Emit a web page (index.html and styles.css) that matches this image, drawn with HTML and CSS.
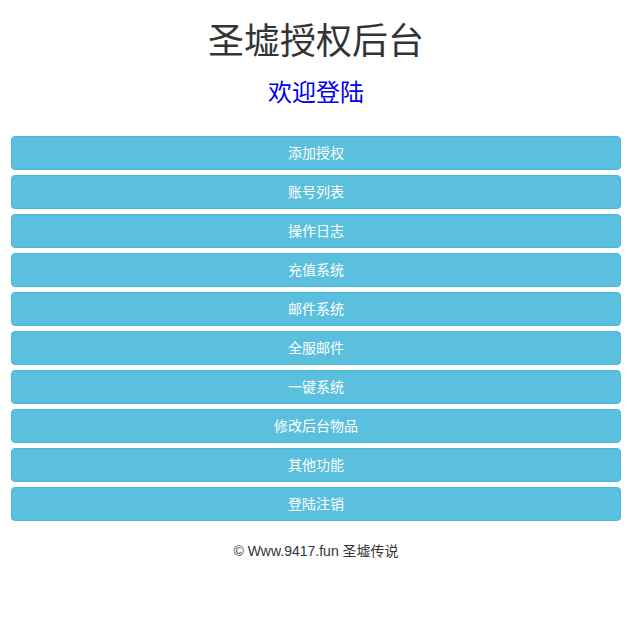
FILE: index.html
```html
<!DOCTYPE html>
<html lang="zh">
<head>
<meta charset="utf-8">
<title>圣墟授权后台</title>
<link rel="stylesheet" href="styles.css">
</head>
<body>
<div class="page">
  <h1 class="title">圣墟授权后台</h1>
  <h3 class="welcome">欢迎登陆</h3>
  <div class="menu">
    <a class="btn">添加授权</a>
    <a class="btn">账号列表</a>
    <a class="btn">操作日志</a>
    <a class="btn">充值系统</a>
    <a class="btn">邮件系统</a>
    <a class="btn">全服邮件</a>
    <a class="btn">一键系统</a>
    <a class="btn">修改后台物品</a>
    <a class="btn">其他功能</a>
    <a class="btn">登陆注销</a>
  </div>
  <p class="footer">© Www.9417.fun 圣墟传说</p>
</div>
</body>
</html>
```

FILE: styles.css
```css
html, body {
  margin: 0;
  padding: 0;
  background: #fff;
}
body {
  font-family: "Liberation Sans", "Noto Sans CJK SC", sans-serif;
  font-size: 14px;
  color: #333;
}
.page {
  padding: 0 12px 0 11px;
}
.title {
  margin: 22px 0 0;
  font-size: 36px;
  font-weight: 400;
  line-height: 40px;
  text-align: center;
  color: #333;
}
.welcome {
  margin: 11px 0 0;
  font-size: 24px;
  font-weight: 400;
  line-height: 40px;
  text-align: center;
  color: #0000ee;
}
.menu {
  margin-top: 23px;
  display: flex;
  flex-direction: column;
  gap: 5px;
}
.btn {
  display: block;
  height: 34px;
  box-sizing: border-box;
  line-height: 32px;
  text-align: center;
  color: #fff;
  background: #5bc0de;
  border: 1px solid #46b8da;
  border-radius: 4px;
  font-size: 14px;
  text-decoration: none;
}
.footer {
  margin: 20px 0 0;
  text-align: center;
  line-height: 20px;
  font-size: 14px;
  color: #333;
}
```
